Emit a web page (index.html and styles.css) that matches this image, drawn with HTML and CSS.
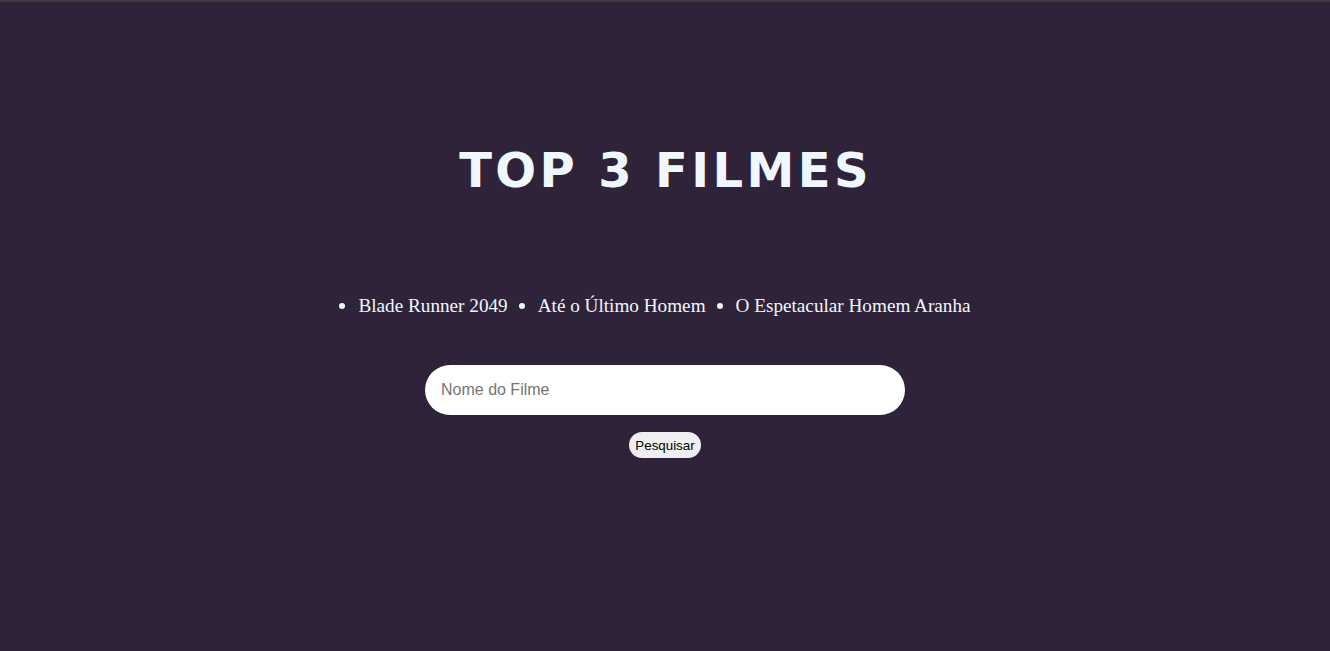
FILE: index.html
```html
<!DOCTYPE html>
<html lang="pt-BR">
<head>
<meta charset="utf-8">
<title>Top 3 Filmes</title>
<link rel="stylesheet" href="styles.css">
</head>
<body>
<main class="page">
  <h1 class="title">TOP 3 FILMES</h1>
  <ul class="movies">
    <li class="movie">Blade Runner 2049</li>
    <li class="movie">Até o Último Homem</li>
    <li class="movie">O Espetacular Homem Aranha</li>
  </ul>
  <form class="search">
    <input class="search-input" type="text" placeholder="Nome do Filme">
    <button class="search-button" type="button">Pesquisar</button>
  </form>
</main>
</body>
</html>
```

FILE: styles.css
```css
html, body {
  margin: 0;
  padding: 0;
  height: 100%;
}
body {
  background: #2f233a;
  border-top: 2px solid #3c3b3d;
  box-sizing: border-box;
  font-family: "Liberation Serif", serif;
}
.page {
  display: flex;
  flex-direction: column;
  align-items: center;
  padding-top: 140px;
}
.title {
  margin: 0;
  font-family: "DejaVu Sans", sans-serif;
  font-weight: bold;
  font-size: 48px;
  line-height: 56px;
  letter-spacing: 3.4px;
  color: #f0f8ff;
  padding-left: 1px;
}
.movies {
  display: flex;
  justify-content: center;
  margin: 96px 0 0;
  padding: 0;
  list-style: none;
  font-size: 19.2px;
  line-height: 23px;
  color: #f0f8ff;
  gap: 11px;
  margin-left: -20px;
}
.movie {
  display: flex;
  align-items: center;
}
.movie::before {
  content: "";
  width: 6px;
  height: 6px;
  border-radius: 50%;
  background: #f0f8ff;
  margin-right: 13px;
}
.search {
  display: flex;
  flex-direction: column;
  align-items: center;
  margin-top: 48px;
}
.search-input {
  box-sizing: border-box;
  width: 480px;
  height: 50px;
  border: none;
  border-radius: 25px;
  padding: 0 16px;
  font-family: "Liberation Sans", Arial, sans-serif;
  font-size: 16px;
  background: #fff;
  outline: none;
}
.search-input::placeholder {
  color: #757575;
}
.search-button {
  margin-top: 17px;
  height: 26px;
  padding: 0 6.5px;
  border: none;
  border-radius: 13px;
  background: #efefef;
  font-family: "Liberation Sans", Arial, sans-serif;
  font-size: 13.33px;
  color: #000;
}
```
